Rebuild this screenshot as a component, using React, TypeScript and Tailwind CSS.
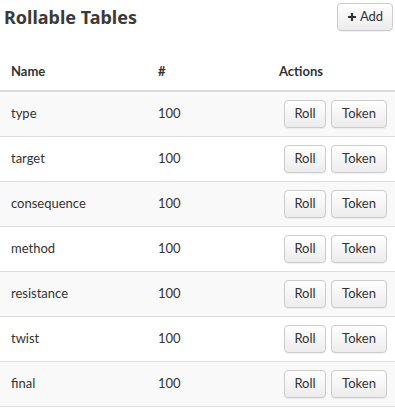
import React from 'react';

const rows = ['type', 'target', 'consequence', 'method', 'resistance', 'twist', 'final'];

const Btn = ({ children, className = '' }: { children: React.ReactNode; className?: string }) => (
  <button
    className={`h-[28px] rounded-[4px] border border-[#ccc] bg-gradient-to-b from-white to-[#ececec] text-[13px] text-[#333] shadow-[0_1px_1px_rgba(0,0,0,0.06)] ${className}`}
  >
    {children}
  </button>
);

const App = () => {
  return (
    <div className="w-[395px] h-[408px] overflow-hidden bg-white text-[#333]" style={{ fontFamily: 'Lato, "Noto Sans", sans-serif' }}>
      <div className="flex items-start justify-between pl-[4px] pr-[2px]">
        <h2 className="pt-[6px] text-[18px] font-bold leading-[22px] text-[#3a3a3a]" style={{ fontFamily: '"Noto Sans", Lato, sans-serif' }}>
          Rollable Tables
        </h2>
        <Btn className="mt-[3px] h-[26px] w-[56px] flex items-center justify-center gap-[3px]">
          <svg width="10" height="10" viewBox="0 0 10 10">
            <path d="M5 1v8M1 5h8" stroke="#333" strokeWidth="2.2" />
          </svg>
          <span>Add</span>
        </Btn>
      </div>

      <div className="mt-[23px]">
        <div className="grid grid-cols-[150px_121px_1fr] h-[38px] items-center border-b-2 border-[#ddd] text-[13px] font-bold">
          <div className="pl-[11px]">Name</div>
          <div className="pl-[8px]">#</div>
          <div className="pl-[8px]">Actions</div>
        </div>
        {rows.map((r, i) => (
          <div
            key={r}
            className={`grid grid-cols-[150px_121px_1fr] h-[45px] items-center border-b border-[#ddd] text-[13px] ${i % 2 === 0 ? 'bg-[#f9f9f9]' : 'bg-white'}`}
          >
            <div className="pl-[11px]">{r}</div>
            <div className="pl-[8px]">100</div>
            <div className="flex justify-end gap-[5px] pr-[8px]">
              <Btn className="w-[42px]">Roll</Btn>
              <Btn className="w-[56px]">Token</Btn>
            </div>
          </div>
        ))}
      </div>
    </div>
  );
};

export default App;
